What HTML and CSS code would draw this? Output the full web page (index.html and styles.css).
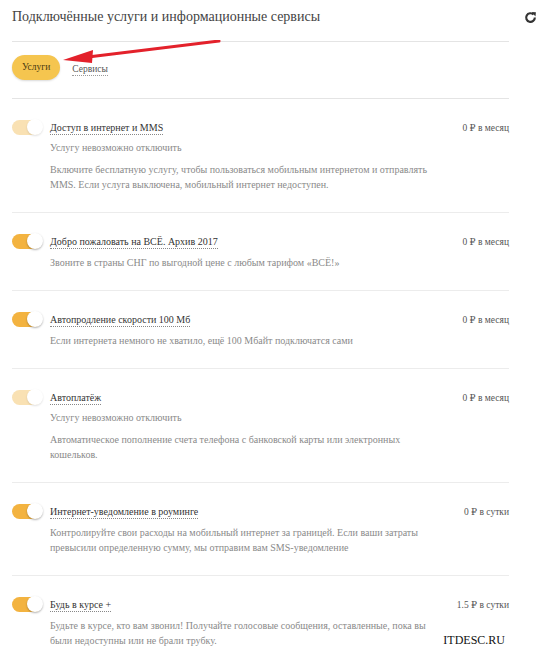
FILE: index.html
```html
<!DOCTYPE html>
<html lang="ru">
<head>
  <meta charset="UTF-8">
  <title>Подключённые услуги и информационные сервисы</title>
  <link rel="stylesheet" href="styles.css">
</head>
<body>
  <main class="page">
    <div class="header">
      <h1>Подключённые услуги и информационные сервисы</h1>
      <svg class="refresh" width="13" height="13" viewBox="0 0 12 12" aria-hidden="true">
        <path d="M10 6 A4 4 0 1 1 8.8 3.2" fill="none" stroke="#333" stroke-width="2"/>
        <path d="M7 1 L11 1.2 L10.6 5 Z" fill="#333"/>
      </svg>
    </div>

    <div class="tabs">
      <span class="tab tab--active">Услуги</span>
      <span class="tab">Сервисы</span>
    </div>

    <!-- red pointer drawn over the tabs -->
    <svg class="arrow" width="240" height="40" viewBox="0 0 240 40" aria-hidden="true">
      <line x1="219" y1="1" x2="88" y2="17" stroke="#e3212b" stroke-width="3" stroke-linecap="round"/>
      <polygon points="63,20 93,10 92,23" fill="#e3212b"/>
    </svg>

    <ul class="list">
      <li class="item">
        <span class="toggle toggle--off"></span>
        <div class="body">
          <div class="top">
            <span class="name">Доступ в интернет и MMS</span>
            <span class="price">0 ₽ в месяц</span>
          </div>
          <p class="note">Услугу невозможно отключить</p>
          <p class="desc">Включите бесплатную услугу, чтобы пользоваться мобильным интернетом и отправлять MMS. Если услуга выключена, мобильный интернет недоступен.</p>
        </div>
      </li>
      <li class="item">
        <span class="toggle"></span>
        <div class="body">
          <div class="top">
            <span class="name">Добро пожаловать на ВСЁ. Архив 2017</span>
            <span class="price">0 ₽ в месяц</span>
          </div>
          <p class="desc">Звоните в страны СНГ по выгодной цене с любым тарифом «ВСЁ!»</p>
        </div>
      </li>
      <li class="item">
        <span class="toggle"></span>
        <div class="body">
          <div class="top">
            <span class="name">Автопродление скорости 100 Мб</span>
            <span class="price">0 ₽ в месяц</span>
          </div>
          <p class="desc">Если интернета немного не хватило, ещё 100 Мбайт подключатся сами</p>
        </div>
      </li>
      <li class="item">
        <span class="toggle toggle--off"></span>
        <div class="body">
          <div class="top">
            <span class="name">Автоплатёж</span>
            <span class="price">0 ₽ в месяц</span>
          </div>
          <p class="note">Услугу невозможно отключить</p>
          <p class="desc">Автоматическое пополнение счета телефона с банковской карты или электронных кошельков.</p>
        </div>
      </li>
      <li class="item">
        <span class="toggle"></span>
        <div class="body">
          <div class="top">
            <span class="name">Интернет-уведомление в роуминге</span>
            <span class="price">0 ₽ в сутки</span>
          </div>
          <p class="desc">Контролируйте свои расходы на мобильный интернет за границей. Если ваши затраты превысили определенную сумму, мы отправим вам SMS-уведомление</p>
        </div>
      </li>
      <li class="item">
        <span class="toggle"></span>
        <div class="body">
          <div class="top">
            <span class="name">Будь в курсе +</span>
            <span class="price">1.5 ₽ в сутки</span>
          </div>
          <p class="desc">Будьте в курсе, кто вам звонил! Получайте голосовые сообщения, оставленные, пока вы были недоступны или не брали трубку.</p>
        </div>
      </li>
    </ul>

    <div class="watermark">ITDESC.RU</div>
  </main>
</body>
</html>
```

FILE: styles.css
```css
body {
  margin: 0;
  font-family: 'Liberation Serif', 'DejaVu Serif', serif;
  color: #333;
  background: #fff;
}
.page {
  position: relative;
  padding: 0 13px 0 12px;
  height: 657px;
  overflow: hidden;
}
.header {
  display: flex;
  justify-content: space-between;
  align-items: center;
  height: 34px;
}
h1 {
  margin: 0;
  font-size: 14px;
  font-weight: normal;
  color: #444;
}
.tabs {
  display: flex;
  align-items: flex-start;
  gap: 12px;
  margin: 7px 28px 0 0;
  padding-top: 13px;
  height: 43px;
  border-top: 1px solid #e4e4e4;
  border-bottom: 1px solid #e4e4e4;
}
.tab {
  font-size: 9.5px;
  color: #555;
  border-bottom: 1px dotted #999;
  line-height: 12px;
  margin-top: 8px;
}
.tab--active {
  margin-top: 0;
  background: #f5c54f;
  color: #4a3a10;
  border: 0;
  border-radius: 13px;
  padding: 6px 10px;
  line-height: 13px;
  box-shadow: 0 1px 2px rgba(0,0,0,0.15);
}
.arrow {
  position: absolute;
  left: 0;
  top: 40px;
}
.list {
  list-style: none;
  margin: 0 28px 0 0;
  padding: 0;
}
.item {
  display: flex;
  gap: 8px;
  padding: 21px 0 20px;
  border-bottom: 1px solid #ececec;
}
.item:last-child {
  border-bottom: 0;
}
.toggle {
  flex: none;
  position: relative;
  width: 30px;
  height: 15px;
  border-radius: 8px;
  background: #f3b340;
}
.toggle::after {
  content: "";
  position: absolute;
  right: -1px;
  top: -1px;
  width: 16px;
  height: 16px;
  border-radius: 50%;
  background: #fff;
  box-shadow: 0 1px 2px rgba(0,0,0,0.3);
}
.toggle--off {
  background: #f9e1b3;
}
.toggle--off::after {
  box-shadow: 0 1px 2px rgba(0,0,0,0.12);
}
.body {
  flex: 1;
}
.top {
  display: flex;
  justify-content: space-between;
  align-items: center;
  height: 15px;
}
.name {
  font-size: 10px;
  color: #333;
  border-bottom: 1px dotted #888;
  line-height: 13px;
}
.price {
  font-size: 9.5px;
  color: #555;
}
.note {
  margin: 5px 0 0;
  font-size: 10px;
  line-height: 15px;
  color: #8a8a8a;
}
.desc {
  margin: 6px 0 0;
  font-size: 10px;
  line-height: 15px;
  color: #8a8a8a;
  max-width: 380px;
}
.note + .desc {
  margin-top: 7px;
}
.watermark {
  position: absolute;
  right: 45px;
  bottom: 9px;
  font-size: 12px;
  color: #111;
  background: #fff;
}
```
